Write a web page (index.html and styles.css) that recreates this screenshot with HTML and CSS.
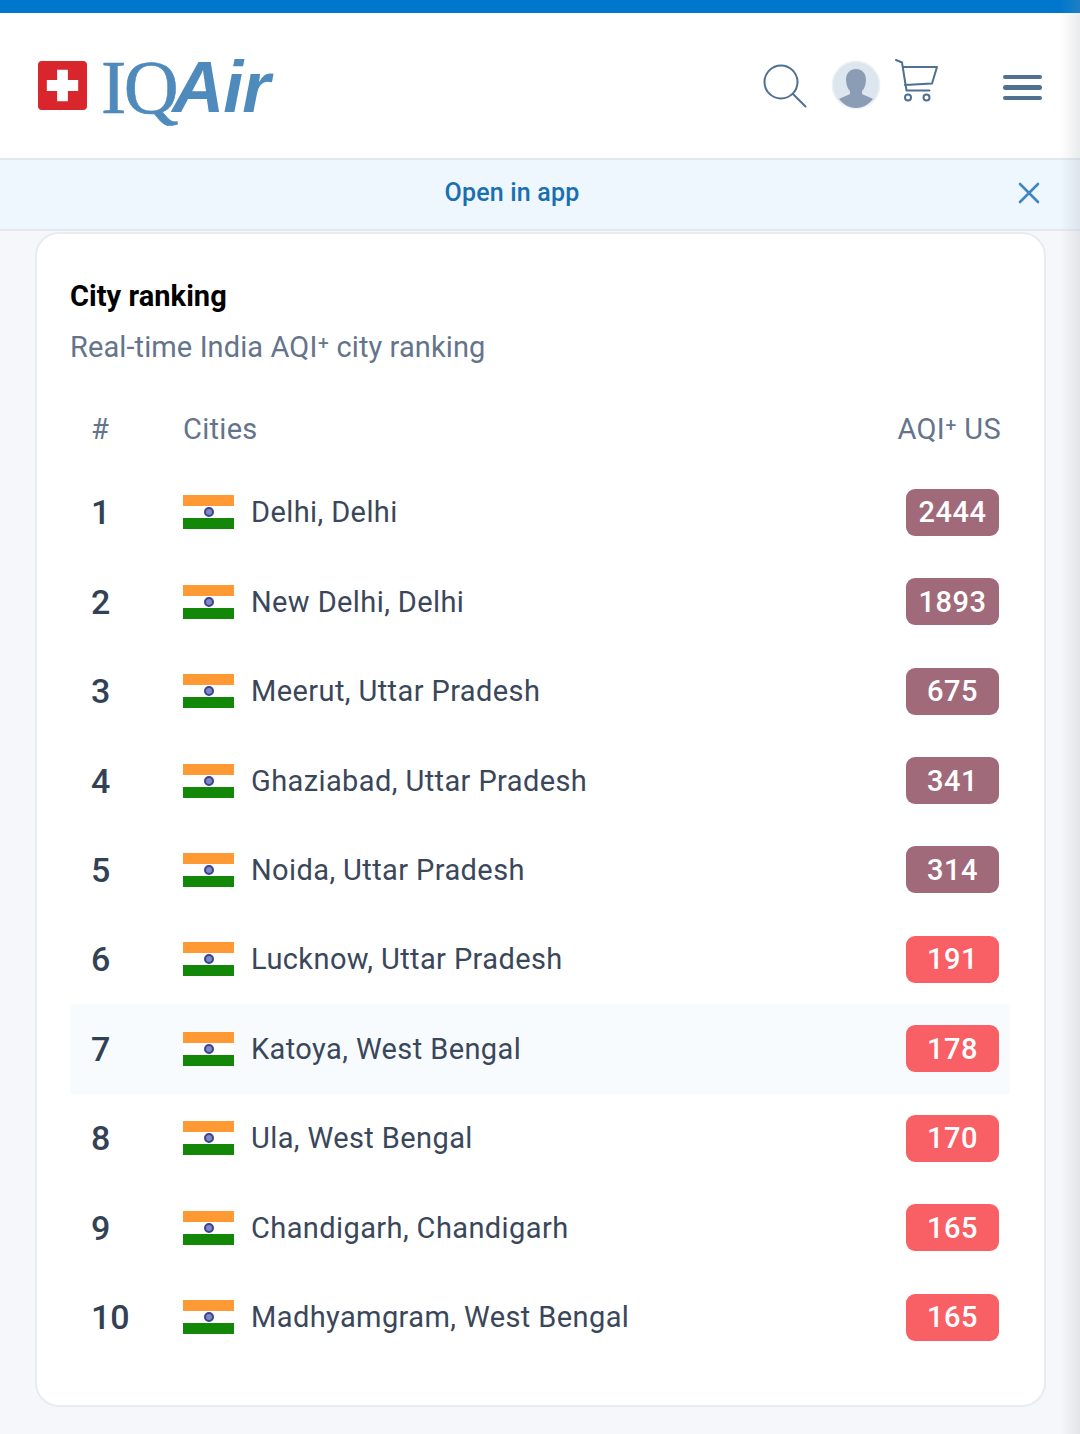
FILE: index.html
```html
<!DOCTYPE html>
<html lang="en">
<head>
<meta charset="utf-8">
<title>City ranking</title>
<link rel="stylesheet" href="styles.css">
</head>
<body>
<div class="topbar"></div>
<header class="header">
  <div class="logo">
    <svg class="swiss" viewBox="0 0 50 50"><rect width="50" height="50" rx="4" fill="#d9252c"/><path d="M19.500 9h11v10.500H41v11H30.500V41h-11V30.500H9v-11h10.500z" fill="#fff"/></svg>
    <span class="logo-iq">IQ</span><span class="logo-air">Air</span>
  </div>
  <div class="tools">
    <svg class="i-search" viewBox="0 0 44 44" fill="none" stroke="#4f7090" stroke-width="2"><circle cx="18" cy="18" r="16.500"/><path d="M30 30l12.500 12.500" stroke-linecap="round"/></svg>
    <svg class="i-user" viewBox="0 0 50 50"><circle cx="25" cy="25" r="24.500" fill="#eef2f7"/><circle cx="25" cy="25" r="23" fill="#dde5ee"/><path d="M25 9c6 0 10 4 10 11 0 5-2 9-4 11v3c3 2 8 3 11 5-4 5-10 9-17 9s-13-4-17-9c3-2 8-3 11-5v-3c-2-2-4-6-4-11 0-7 4-11 10-11z" fill="#8a9db5"/></svg>
    <svg class="i-cart" viewBox="0 0 44 44" fill="none" stroke="#4f7090" stroke-width="2" stroke-linecap="round" stroke-linejoin="round"><path d="M1 1l6 2.500 4.500 28h23"/><path d="M8 8h34l-5 16.500-27 1.500" /><circle cx="13" cy="38.500" r="3"/><circle cx="31.500" cy="38.500" r="3"/></svg>
    <div class="i-menu"><span></span><span></span><span></span></div>
  </div>
</header>
<div class="banner">
  <a class="banner-link">Open in app</a>
  <svg class="i-close" viewBox="0 0 22 22" fill="none" stroke="#3f87c4" stroke-width="2.600" stroke-linecap="round"><path d="M2 2l18 18M20 2L2 20"/></svg>
</div>
<main class="card">
  <h1 class="title">City ranking</h1>
  <p class="subtitle">Real-time India AQI⁺ city ranking</p>
  <div class="thead"><span class="c-rank">#</span><span class="c-city">Cities</span><span class="c-aqi">AQI⁺ US</span></div>
  <div class="rows">
    <div class="row"><span class="c-rank rank">1</span><span class="flag"><i></i></span><span class="city">Delhi, Delhi</span><span class="badge hazard">2444</span></div>
    <div class="row"><span class="c-rank rank">2</span><span class="flag"><i></i></span><span class="city">New Delhi, Delhi</span><span class="badge hazard">1893</span></div>
    <div class="row"><span class="c-rank rank">3</span><span class="flag"><i></i></span><span class="city">Meerut, Uttar Pradesh</span><span class="badge hazard">675</span></div>
    <div class="row"><span class="c-rank rank">4</span><span class="flag"><i></i></span><span class="city">Ghaziabad, Uttar Pradesh</span><span class="badge hazard">341</span></div>
    <div class="row"><span class="c-rank rank">5</span><span class="flag"><i></i></span><span class="city">Noida, Uttar Pradesh</span><span class="badge hazard">314</span></div>
    <div class="row"><span class="c-rank rank">6</span><span class="flag"><i></i></span><span class="city">Lucknow, Uttar Pradesh</span><span class="badge unhealthy">191</span></div>
    <div class="row active"><span class="c-rank rank">7</span><span class="flag"><i></i></span><span class="city">Katoya, West Bengal</span><span class="badge unhealthy">178</span></div>
    <div class="row"><span class="c-rank rank">8</span><span class="flag"><i></i></span><span class="city">Ula, West Bengal</span><span class="badge unhealthy">170</span></div>
    <div class="row"><span class="c-rank rank">9</span><span class="flag"><i></i></span><span class="city">Chandigarh, Chandigarh</span><span class="badge unhealthy">165</span></div>
    <div class="row"><span class="c-rank rank">10</span><span class="flag"><i></i></span><span class="city">Madhyamgram, West Bengal</span><span class="badge unhealthy">165</span></div>
  </div>
</main>
<div class="edge"></div>
</body>
</html>
```
FILE: styles.css
```css
* { box-sizing: border-box; }
html, body { margin: 0; height: 1434px; overflow: hidden; }
body { background: #f6f7fa; font-family: Roboto, "Liberation Sans", sans-serif; position: relative; }
.topbar { height: 13px; background: #0077cc; }
.header { height: 147px; background: #fff; border-bottom: 2px solid #e2e8f0; display: flex; align-items: center; justify-content: space-between; padding: 0 38px; }
.logo { display: flex; align-items: center; height: 80px; margin-top: 1px; color: #4f8abd; }
.swiss { width: 49px; height: 49px; margin-right: 14px; margin-top: -1px; flex: none; }
.logo-iq { font-family: "Liberation Serif", serif; font-size: 76px; line-height: 80px; letter-spacing: -2.500px; margin-top: 2px; -webkit-text-stroke: 0.600px #4f8abd; }
.logo-air { font-family: "Liberation Sans", sans-serif; font-style: italic; font-weight: 700; font-size: 72px; line-height: 80px; letter-spacing: -1px; margin-left: -4px; margin-top: 2px; }
.tools { display: flex; align-items: flex-start; height: 60px; margin-top: -6px; }
.i-search { width: 44px; height: 44px; margin-top: 11px; }
.i-user { width: 50px; height: 50px; margin-left: 24px; margin-top: 7px; }
.i-cart { width: 44px; height: 44px; margin-left: 14px; margin-top: 6px; }
.i-menu { width: 39px; margin-left: 64px; margin-top: 22px; display: flex; flex-direction: column; gap: 6px; }
.i-menu span { display: block; height: 4.500px; border-radius: 3px; background: #4f7090; }
.banner { height: 71px; background: #eef6fe; border-bottom: 2px solid #e5e9ef; display: flex; align-items: center; justify-content: center; position: relative; padding: 0 56px 4px 0; }
.banner-link { color: #1a6fb0; font-size: 25px; font-weight: 500; letter-spacing: 0.200px; }
.i-close { position: absolute; left: 1018px; top: 22px; width: 22px; height: 22px; }
.card { width: 1011px; height: 1175px; margin: 1px 0 0 35px; background: #fff; border: 2px solid #e8ebf0; border-radius: 24px; padding: 44px 34px 0 33px; }
.title { margin: 0; font-size: 29px; line-height: 36px; font-weight: 700; color: #000; letter-spacing: 0.050px; }
.subtitle { margin: 15px 0 0; font-size: 29px; line-height: 36px; color: #64748b; letter-spacing: 0.100px; }
.thead { display: flex; align-items: center; height: 36px; margin-top: 46px; font-size: 29px; color: #64748b; letter-spacing: 0.300px; }
.c-rank { width: 113px; padding-left: 21px; flex: none; }
.c-city { flex: 1; }
.c-aqi { padding-right: 9px; }
.rows { margin-top: 20.500px; }
.row { display: flex; align-items: center; height: 89.440px; }
.row.active { background: #f8fbfe; }
.rank { font-size: 34px; font-weight: 500; color: #334155; }
.flag { width: 51px; height: 34px; margin-right: 17px; flex: none; position: relative; background: linear-gradient(#ff9933 0 11px, #fff 11px 23px, #138808 23px); }
.flag i { position: absolute; left: 20.500px; top: 12px; width: 10px; height: 10px; border-radius: 50%; border: 2px solid #39448f; background: #7f88c2; }
.city { flex: 1; font-size: 29px; color: #3a475a; letter-spacing: 0.400px; }
.badge { width: 93px; height: 47px; margin-right: 11px; border-radius: 9px; color: #fff; font-size: 29px; font-weight: 500; letter-spacing: 0.500px; display: flex; align-items: center; justify-content: center; }
.hazard { background: #a06a7b; }
.unhealthy { background: #f96065; }
.edge { position: absolute; top: 0; right: 0; width: 20px; height: 100%; background: linear-gradient(90deg, rgba(150,155,165,0), rgba(150,155,165,0.2)); pointer-events: none; }
```
